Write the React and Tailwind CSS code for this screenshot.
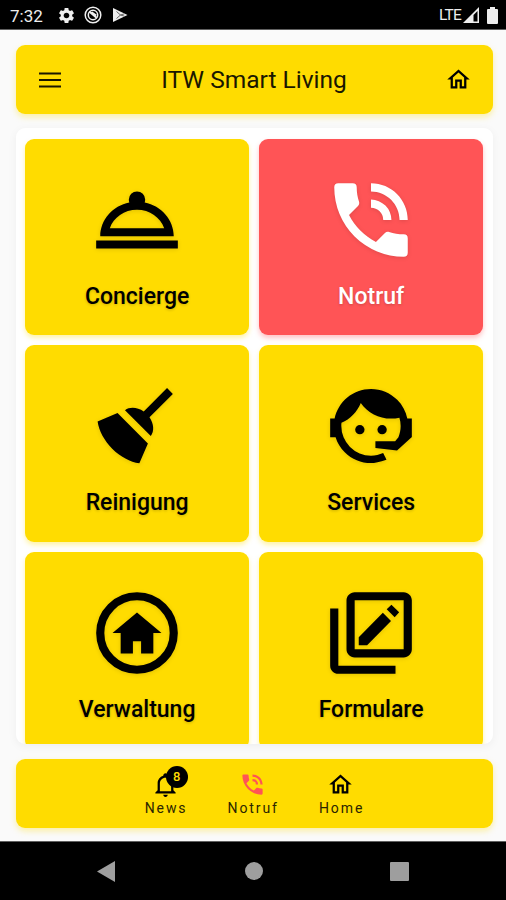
import React from 'react';
import { MdOutlineHome, MdSettings } from 'react-icons/md';

// === ICONS ===
const BellhopIcon = ({ className }) => (
  <svg viewBox="0 0 24 24" fill="currentColor" className={className}>
    <path d="M12 5a2 2 0 0 1 2 2c0 .24-.04.47-.12.69C17.95 8.5 21 11.91 21 16H3c0-4.09 3.05-7.5 7.12-8.31C10.04 7.47 10 7.24 10 7a2 2 0 0 1 2-2m10 14H2v-2h20v2M12 9.5c-3.11 0-5.75 1.89-6.66 4.5h13.32c-.91-2.61-3.55-4.5-6.66-4.5z" />
  </svg>
);

const PhoneIcon = ({ className }) => (
  <svg viewBox="0 0 24 24" fill="currentColor" className={className}>
    <path d="M15 12h2a5 5 0 0 0-5-5v2a3 3 0 0 1 3 3m4 0h2c0-5-4.03-9-9-9v2c3.86 0 7 3.13 7 7m1 3.5c-1.25 0-2.45-.2-3.57-.57-.35-.11-.74-.03-1.02.25l-2.2 2.2c-2.83-1.44-5.15-3.76-6.59-6.59l2.2-2.21c.28-.28.36-.66.25-1.02C8.7 6.45 8.5 5.25 8.5 4a1 1 0 0 0-1-1H4a1 1 0 0 0-1 1 17 17 0 0 0 17 17 1 1 0 0 0 1-1v-3.5a1 1 0 0 0-1-1z" />
  </svg>
);

const BroomIcon = ({ className }) => (
  <svg viewBox="0 0 24 24" fill="currentColor" className={className}>
    <path d="M19.36 2.72l1.42 1.42-5.72 5.71c1.07 1.54 1.22 3.39.32 4.59L9.06 8.12c1.2-.9 3.05-.75 4.59.32l5.71-5.72M5.93 17.57c-2.01-2.01-3.24-4.41-3.58-6.65l4.88-2.09 7.44 7.44-2.09 4.88c-2.24-.34-4.64-1.57-6.65-3.58z" />
  </svg>
);

const AgentIcon = ({ className }) => (
  <svg viewBox="0 0 24 24" fill="currentColor" className={className}>
    <path d="M18.72 14.76C19.07 13.91 19.26 13 19.26 12C19.26 11.28 19.15 10.59 18.96 9.95C18.31 10.1 17.63 10.18 16.92 10.18C13.86 10.18 11.15 8.67 9.5 6.34C8.61 8.5 6.91 10.26 4.77 11.22C4.73 11.47 4.73 11.74 4.73 12A7.27 7.27 0 0 0 12 19.27C13.05 19.27 14.06 19.04 14.97 18.63C15.54 19.72 15.8 20.26 15.78 20.26C14.14 20.81 12.87 21.08 12 21.08C9.58 21.08 7.27 20.13 5.57 18.42C4.53 17.38 3.76 16.11 3.33 14.73H2V10.18H3.09C3.93 6.04 7.6 2.92 12 2.92C14.4 2.92 16.71 3.87 18.42 5.58C19.69 6.84 20.54 8.45 20.89 10.18H22V14.73H21.94L18.38 18L13.08 17.4V15.73H17.91L18.72 14.76Z" />
    <circle cx="9.27" cy="12.91" r="1.14" />
    <circle cx="14.72" cy="12.91" r="1.14" />
  </svg>
);

const HomeCircleIcon = ({ className }) => (
  <svg viewBox="0 0 24 24" fill="currentColor" className={className}>
    <circle cx="12" cy="12" r="9" fill="none" stroke="currentColor" strokeWidth="2" />
    <path d="M11 14v3H8v-5H6l6-5 6 5h-2v5h-3v-3z" />
  </svg>
);

const FormsIcon = ({ className }) => (
  <svg viewBox="0 0 24 24" fill="currentColor" className={className}>
    <path d="M4 6H2v14c0 1.1.9 2 2 2h14v-2H4V6z" />
    <path fillRule="evenodd" d="M20 2H8c-1.1 0-2 .9-2 2v12c0 1.1.9 2 2 2h12c1.1 0 2-.9 2-2V4c0-1.1-.9-2-2-2zm0 14H8V4h12v12z" />
    <path d="M9 13.05V15h2.05l5.85-5.95-2-2zM15.85 6.2l1.15-1.1 1.9 1.8-1.1 1.25z" />
  </svg>
);

const BellIcon = ({ className }) => (
  <svg viewBox="0 0 24 24" fill="currentColor" className={className}>
    <path d="M10 21h4c0 1.1-.9 2-2 2s-2-.9-2-2m11-2v1H3v-1l2-2v-6c0-3.1 2-5.8 5-6.7V4c0-1.1.9-2 2-2s2 .9 2 2v.3c3 .9 5 3.6 5 6.7v6l2 2m-4-8c0-2.8-2.2-5-5-5s-5 2.2-5 5v7h10v-7z" />
  </svg>
);

const tiles = [
  { label: 'Concierge', Icon: BellhopIcon },
  { label: 'Notruf', Icon: PhoneIcon, alert: true },
  { label: 'Reinigung', Icon: BroomIcon },
  { label: 'Services', Icon: AgentIcon },
  { label: 'Verwaltung', Icon: HomeCircleIcon },
  { label: 'Formulare', Icon: FormsIcon },
];

const StatusBar = () => (
  <div className="h-[30px] shrink-0 bg-black border-b border-[#606060] text-[#eee] flex items-center justify-between pl-[10px] pr-[8px]">
    <div className="flex items-center">
      <span className="w-[35px] text-[17px] leading-none pt-[3px]">7:32</span>
      <MdSettings className="size-[19px] ml-[12px] mt-px" />
      <svg viewBox="0 0 18 18" className="size-[18px] ml-[8px] mt-px" fill="none" stroke="currentColor">
        <circle cx="9" cy="9" r="7.8" strokeWidth="1.5" />
        <circle cx="9" cy="9" r="4.7" strokeWidth="1.5" />
        <path d="M5.2 5.6l7.4 6.2M7.6 6.2l4.6 3.4" strokeWidth="1.9" />
      </svg>
      <svg viewBox="0 0 16 16" className="size-[16px] ml-[10px] mt-px" fill="currentColor">
        <path d="M1 1v14l14.5-7z" />
        <path d="M4.5 4.5l4 3.5-4 3.5M8.5 8l4-1.2M8.5 8l4 1.2" stroke="#555" strokeWidth=".9" fill="none" />
      </svg>
    </div>
    <div className="flex items-center">
      <span className="text-[15.5px] leading-none tracking-[-0.8px] pt-[2px]">LTE</span>
      <svg viewBox="0 0 16 16" className="size-[16px] ml-[2px] mt-px">
        <path d="M0 16L16 0v16z" fill="currentColor" />
        <path d="M10.5 8l4-4v10.5h-4z" fill="#000" />
      </svg>
      <svg viewBox="0 0 11 17" className="w-[11px] h-[17px] ml-[8px] mt-px" fill="currentColor">
        <path d="M3 0h5v2h2q1 0 1 1v13q0 1-1 1H1q-1 0-1-1V3q0-1 1-1h2z" />
      </svg>
    </div>
  </div>
);

const Tile = ({ label, Icon, alert }) => (
  <button
    className={`h-[196.5px] rounded-[9px] flex flex-col items-center pt-[32px] ${
      alert
        ? 'bg-[#ff5456] text-white shadow-[0_3px_5px_rgba(255,84,86,0.35)]'
        : 'bg-[#ffdc00] text-black shadow-[0_3px_5px_rgba(255,220,0,0.35)]'
    }`}
  >
    <Icon className="size-[98px] drop-shadow-[0_1px_2px_rgba(0,0,0,0.12)]" />
    <span className="mt-[13px] text-[23px] leading-[30px] font-medium [text-shadow:0_1px_3px_rgba(0,0,0,0.2)]">
      {label}
    </span>
  </button>
);

const NavItem = ({ label, children }) => (
  <button className="flex flex-col items-center">
    <span className="relative">{children}</span>
    <span className="text-[14px] leading-[16px] tracking-[1.9px] -mr-[1.9px] mt-[2px] text-[#2b2500]">{label}</span>
  </button>
);

const App = () => (
  <div className="w-[506px] h-[900px] bg-[#fafafa] flex flex-col overflow-hidden font-[Roboto,sans-serif]">
    <StatusBar />

    {/* App bar */}
    <header className="ml-[16px] mr-[13px] mt-[15px] h-[69px] shrink-0 rounded-[9px] bg-[#ffdc00] shadow-[0_3px_6px_rgba(255,220,0,0.35)] flex items-center justify-between pl-[23px] pr-[21px]">
      <svg viewBox="0 0 22 16" className="w-[22px] h-[16px]" stroke="#1a1700" strokeWidth="2.2">
        <path d="M0 1.5h22M0 8h22M0 14.5h22" />
      </svg>
      <h1 className="text-[24.5px] leading-none text-[#1a1700] pl-[2px] pt-[2px]">ITW Smart Living</h1>
      <MdOutlineHome className="size-[27px]" />
    </header>

    {/* Tile grid, cut off at the bottom edge of the panel */}
    <div className="ml-[16px] mr-[13px] mt-[14px] h-[615.5px] shrink-0 rounded-[9px] bg-white shadow-[0_2px_10px_rgba(0,0,0,0.05)]">
      <main className="h-full overflow-hidden rounded-[9px] pt-[10.5px] pl-[9.3px] pr-[10px] grid grid-cols-2 gap-[10.3px] content-start">
        {tiles.map((tile) => (
          <Tile key={tile.label} {...tile} />
        ))}
      </main>
    </div>

    {/* Bottom navigation */}
    <nav className="ml-[16px] mr-[13px] mt-[15.5px] h-[69px] shrink-0 rounded-[9px] bg-[#ffdc00] shadow-[0_3px_6px_rgba(255,220,0,0.35)] flex justify-center gap-[42px] pt-[11.5px] pr-[2px]">
      <NavItem label="News">
        <BellIcon className="size-[27px]" />
        <span className="absolute left-[14px] -top-[5px] size-[22px] rounded-full bg-black text-[#ffdc00] text-[13px] font-medium flex items-center justify-center">
          8
        </span>
      </NavItem>
      <NavItem label="Notruf">
        <PhoneIcon className="size-[27px] text-[#ff5456]" />
      </NavItem>
      <NavItem label="Home">
        <MdOutlineHome className="size-[27px]" />
      </NavItem>
    </nav>

    {/* System navigation */}
    <div className="mt-auto h-[59px] shrink-0 bg-black border-t border-[#606060] flex items-center text-[#9e9e9e]">
      <svg viewBox="0 0 18 21" className="w-[18px] h-[21px] ml-[97px]" fill="currentColor">
        <path d="M0 10.5L18 0v21z" />
      </svg>
      <span className="size-[18px] rounded-full bg-[#9e9e9e] ml-[130px]" />
      <span className="size-[19px] rounded-[1px] bg-[#9e9e9e] ml-[127px]" />
    </div>
  </div>
);

export default App;
